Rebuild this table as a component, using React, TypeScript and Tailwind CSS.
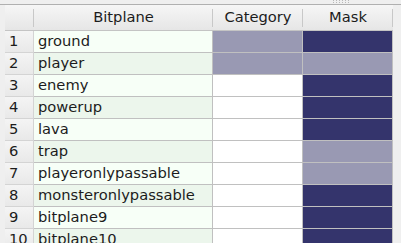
import { Fragment } from 'react';

type Fill = 'none' | 'light' | 'dark';

interface BitplaneRow {
  name: string;
  category: Fill;
  mask: Fill;
}

const rows: BitplaneRow[] = [
  { name: 'ground', category: 'light', mask: 'dark' },
  { name: 'player', category: 'light', mask: 'light' },
  { name: 'enemy', category: 'none', mask: 'dark' },
  { name: 'powerup', category: 'none', mask: 'dark' },
  { name: 'lava', category: 'none', mask: 'dark' },
  { name: 'trap', category: 'none', mask: 'light' },
  { name: 'playeronlypassable', category: 'none', mask: 'light' },
  { name: 'monsteronlypassable', category: 'none', mask: 'dark' },
  { name: 'bitplane9', category: 'none', mask: 'dark' },
  { name: 'bitplane10', category: 'none', mask: 'dark' },
];

const fillClass: Record<Fill, string> = {
  none: 'bg-white',
  light: 'bg-[#9999b3]',
  dark: 'bg-[#34346c]',
};

function HeaderCell({ label }: { label?: string }) {
  return (
    <div className="relative flex h-[26px] items-center justify-center border-b border-[#c4c4c4] bg-gradient-to-b from-[#f6f6f6] to-[#e6e6e6]">
      {label}
      <span className="absolute right-0 top-[4px] h-[18px] w-px bg-[#c8c8c8]" />
    </div>
  );
}

export default function App() {
  return (
    <div
      className="h-[243px] w-[401px] overflow-hidden bg-[#efefef] text-[14.7px] text-[#1c1c1c]"
      style={{ fontFamily: '"DejaVu Sans", sans-serif' }}
    >
      {/* splitter grip */}
      <div className="flex h-[5px] items-start gap-[2px] border-b border-[#b0b0b0] pl-[333px]">
        {[0, 1, 2, 3, 4, 5].map((i) => (
          <div key={i} className="flex flex-col gap-[1px]">
            <span className="h-px w-px bg-[#b8b8b8]" />
            <span className="h-px w-px bg-[#b8b8b8]" />
          </div>
        ))}
      </div>

      <div className="pl-[5px]">
        <div className="grid w-[388px] grid-cols-[29px_179px_90px_90px] bg-white">
          <HeaderCell />
          <HeaderCell label="Bitplane" />
          <HeaderCell label="Category" />
          <HeaderCell label="Mask" />

          {rows.map((row, i) => (
            <Fragment key={row.name}>
              <div className="flex h-[22px] items-center border-b border-r border-[#d4d4d4] bg-gradient-to-b from-[#f4f4f4] to-[#e9e9e9] pl-[4px]">
                {i + 1}
              </div>
              <div
                className={`flex h-[22px] items-center border-b border-r border-[#c0c0c0] pl-[4px] ${
                  i % 2 === 0 ? 'bg-[#f7fff7]' : 'bg-[#ecf6ec]'
                }`}
              >
                {row.name}
              </div>
              <div className={`h-[22px] border-b border-r border-[#c0c0c0] ${fillClass[row.category]}`} />
              <div className={`h-[22px] border-b border-r border-[#c0c0c0] ${fillClass[row.mask]}`} />
            </Fragment>
          ))}
        </div>
      </div>
    </div>
  );
}
